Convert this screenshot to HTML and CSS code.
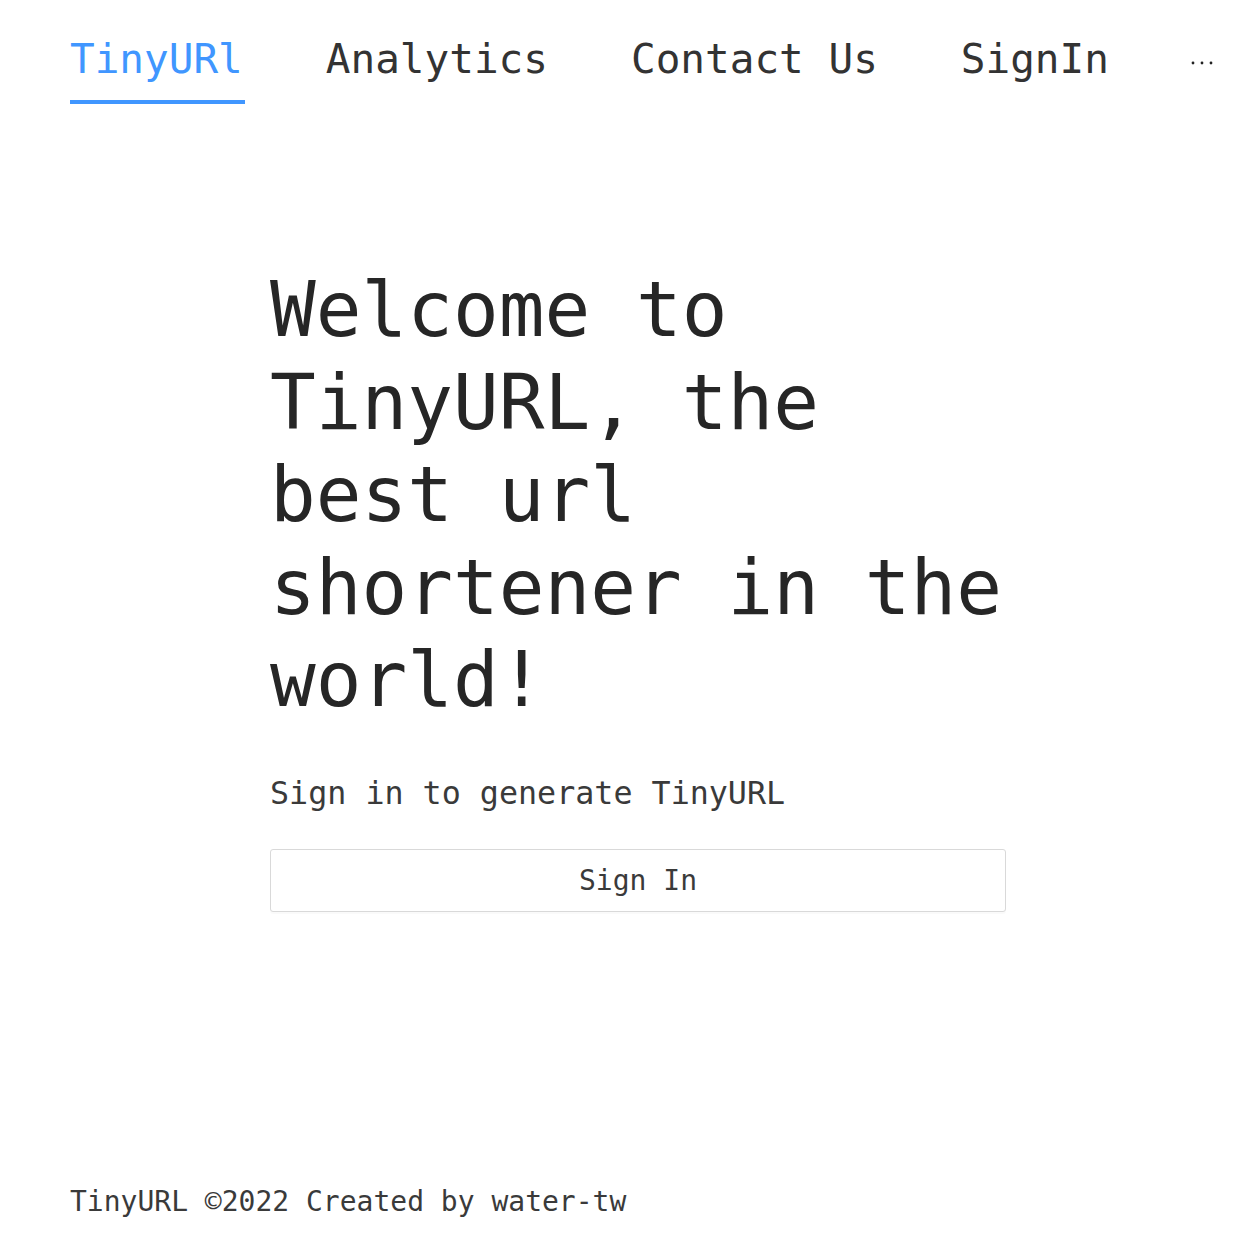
FILE: index.html
```html
<!DOCTYPE html>
<html lang="en">
<head>
<meta charset="utf-8">
<title>TinyURL</title>
<link rel="stylesheet" href="styles.css">
</head>
<body>
<div class="page">
  <nav class="nav">
    <a class="nav-item active">TinyURl</a>
    <a class="nav-item">Analytics</a>
    <a class="nav-item">Contact Us</a>
    <a class="nav-item">SignIn</a>
    <span class="nav-more">
      <svg width="24" height="8" viewBox="0 0 24 8"><circle cx="2" cy="4" r="1.4" fill="#222"/><circle cx="11" cy="4" r="1.4" fill="#222"/><circle cx="20" cy="4" r="1.4" fill="#222"/></svg>
    </span>
  </nav>
  <main class="main">
    <h1 class="title">Welcome to TinyURL, the best url shortener in the world!</h1>
    <p class="subtitle">Sign in to generate TinyURL</p>
    <button class="signin-btn" type="button">Sign In</button>
  </main>
  <footer class="footer">TinyURL ©2022 Created by water-tw</footer>
</div>
</body>
</html>
```
FILE: styles.css
```css
* { box-sizing: border-box; }
html, body { margin: 0; padding: 0; background: #fff; }
body {
  font-family: "DejaVu Sans Mono", "Liberation Mono", monospace;
  color: #262626;
}
.page {
  min-height: 100vh;
  display: flex;
  flex-direction: column;
}
.nav {
  display: flex;
  align-items: flex-start;
  gap: 83px;
  padding: 18px 0 0 70px;
}
.nav-item {
  font-size: 41px;
  line-height: 82px;
  color: #333;
  text-decoration: none;
  border-bottom: 4px solid transparent;
  white-space: nowrap;
}
.nav-item.active {
  color: #4096ff;
  border-bottom-color: #4096ff;
  padding-right: 2px;
  margin-right: -2px;
}
.nav-more {
  display: flex;
  align-items: center;
  height: 82px;
  padding-top: 8px;
  margin-left: -1px;
}
.nav-more svg { display: block; }
.main {
  padding-left: 270px;
  padding-top: 160px;
}
.title {
  width: 736px;
  margin: 0;
  font-size: 76px;
  line-height: 92.5px;
  font-weight: normal;
  color: #262626;
}
.subtitle {
  margin: 46px 0 0;
  font-size: 31.7px;
  line-height: 40px;
  color: #3a3a3a;
}
.signin-btn {
  display: block;
  width: 736px;
  height: 63px;
  margin-top: 36px;
  padding: 0;
  background: #fff;
  border: 1px solid #d9d9d9;
  border-radius: 3px;
  box-shadow: 0 2px 0 rgba(0, 0, 0, 0.02);
  font-family: inherit;
  font-size: 28px;
  color: #3a3a3a;
  cursor: pointer;
}
.footer {
  margin-top: auto;
  padding: 0 0 12px 70px;
  font-size: 28px;
  line-height: 40px;
  color: #3a3a3a;
}
```
